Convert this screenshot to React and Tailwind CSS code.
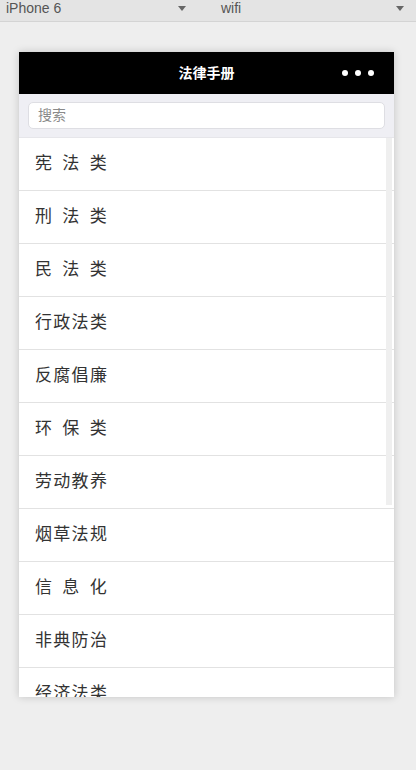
import React from 'react';

const items = [
  '宪 法 类',
  '刑 法 类',
  '民 法 类',
  '行政法类',
  '反腐倡廉',
  '环 保 类',
  '劳动教养',
  '烟草法规',
  '信 息 化',
  '非典防治',
  '经济法类',
];

const Caret = () => (
  <svg width="8" height="5" viewBox="0 0 8 5" className="fill-[#666]">
    <path d="M0 0 H8 L4 5 Z" />
  </svg>
);

const App = () => {
  return (
    <div className="w-[416px] h-[770px] bg-[#eeeeee] overflow-hidden font-['Liberation_Sans','Noto_Sans_CJK_SC',sans-serif]">
      {/* Device toolbar */}
      <div className="h-[22px] bg-[#e4e4e4] border-b border-[#d4d4d4] flex items-start text-[14px] leading-[16px] text-[#555]">
        <div className="w-[190px] pl-[6px] pr-[4px] flex items-center justify-between h-[16px]">
          <span>iPhone 6</span>
          <Caret />
        </div>
        <div className="flex-1 pl-[31px] pr-[12px] flex items-center justify-between h-[16px]">
          <span>wifi</span>
          <Caret />
        </div>
      </div>

      {/* Phone frame */}
      <div className="ml-[19px] mt-[30px] w-[375px] h-[645px] bg-white shadow-[0_0_8px_rgba(0,0,0,0.18)] flex flex-col overflow-hidden">
        <div className="h-[42px] bg-black flex items-center justify-center relative shrink-0">
          <span className="text-white text-[14px] font-bold">法律手册</span>
          <div className="absolute right-[20px] top-[18px] flex gap-[7px]">
            <span className="w-[6px] h-[6px] rounded-full bg-white" />
            <span className="w-[6px] h-[6px] rounded-full bg-white" />
            <span className="w-[6px] h-[6px] rounded-full bg-white" />
          </div>
        </div>

        <div className="h-[44px] bg-[#efeff4] px-[9px] pt-[8px] shrink-0 border-b border-[#e6e6ea]">
          <div className="h-[27px] bg-white rounded-[5px] border border-[#dedee3] flex items-center pl-[9px] text-[14px] text-[#8a8a8a]">
            搜索
          </div>
        </div>

        <div className="relative flex-1 overflow-hidden">
          <div className="absolute right-[2px] top-0 w-[6px] h-[367px] bg-[#efefef]" />
          {items.map((t) => (
            <div
              key={t}
              className="h-[53px] border-b border-[#e2e2e2] flex items-center pl-[16px] text-[17px] text-[#333] tracking-[1.3px] [word-spacing:3px] whitespace-pre"
            >
              {t}
            </div>
          ))}
        </div>
      </div>
    </div>
  );
};

export default App;
